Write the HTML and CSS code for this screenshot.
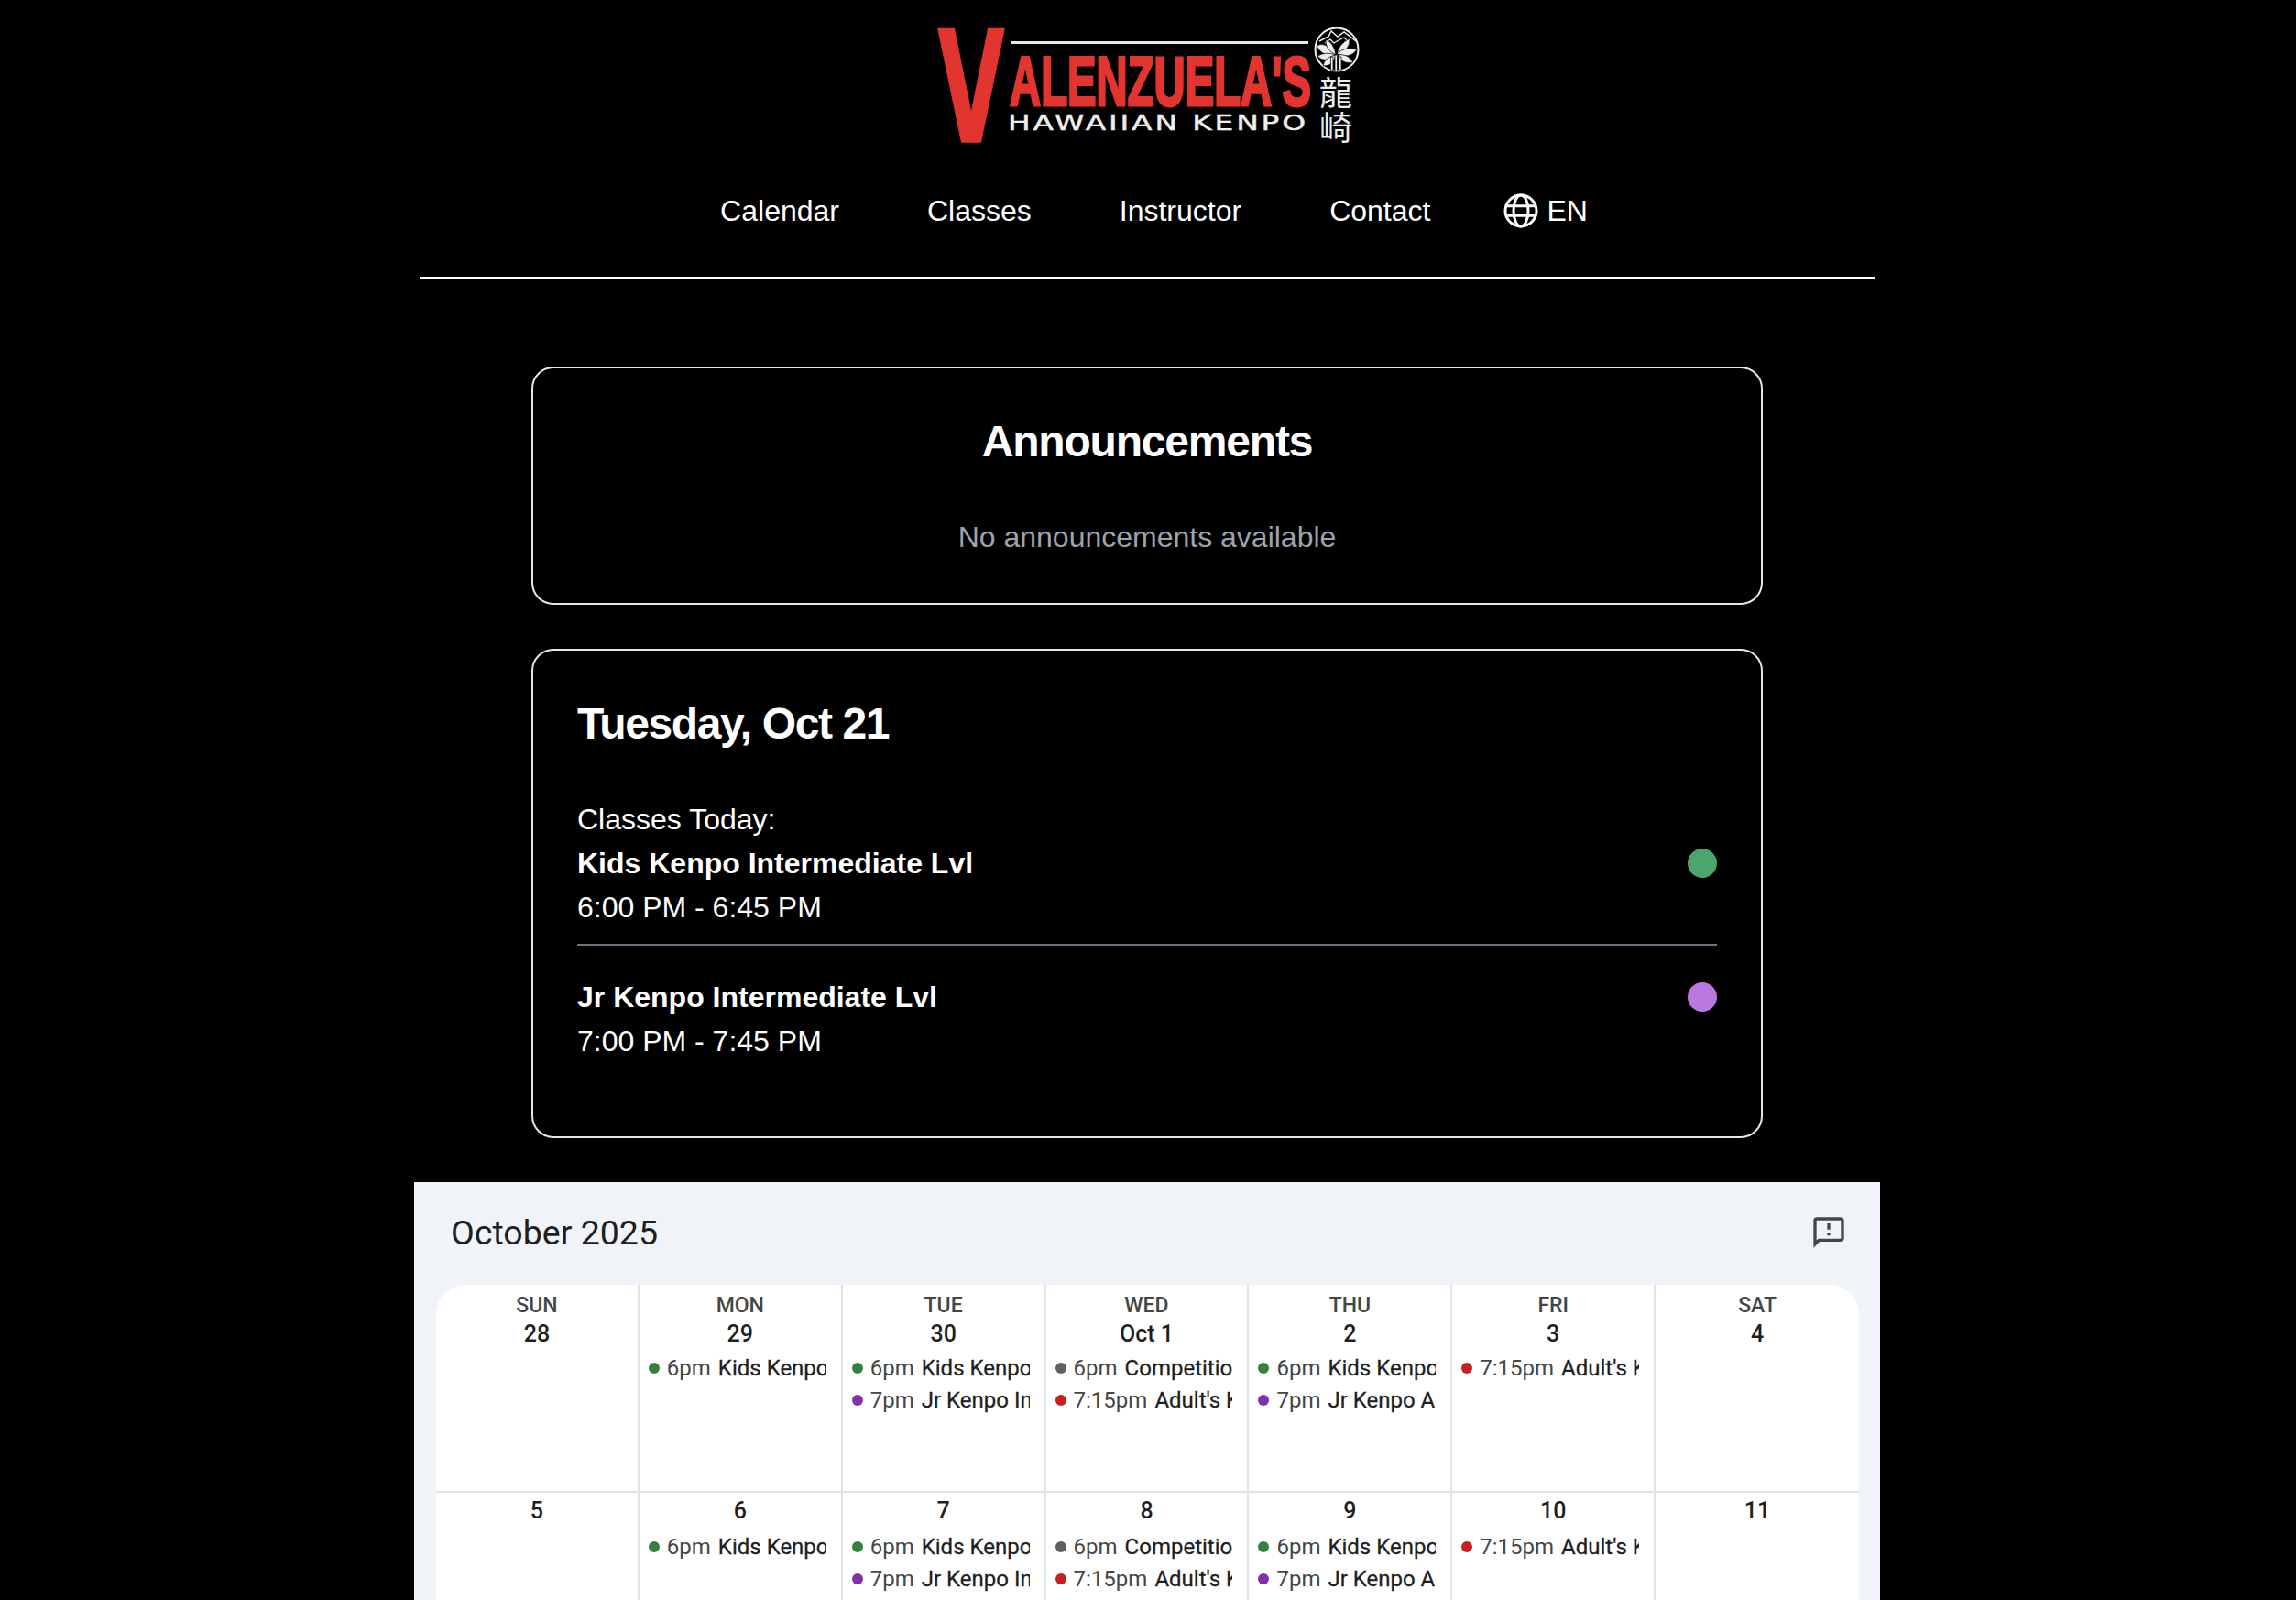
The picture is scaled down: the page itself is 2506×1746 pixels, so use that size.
FILE: index.html
```html
<!DOCTYPE html>
<html lang="en">
<head>
<meta charset="utf-8">
<title>Valenzuela's Hawaiian Kenpo</title>
<link rel="stylesheet" href="styles.css">
</head>
<body>
<div class="page">
  <header class="site-header">
    <svg class="logo" viewBox="1012 24 480 144" width="480" height="144" role="img" aria-label="Valenzuela's Hawaiian Kenpo">
      <text class="logo-v" transform="translate(1060 155) scale(.72 1.28)" text-anchor="middle" font-size="132">V</text>
      <rect x="1103" y="45" width="325" height="3" fill="#e8e8e8"/>
      <text class="logo-name" x="1102" y="114.500" textLength="329" lengthAdjust="spacingAndGlyphs" font-size="76">ALENZUELA'S</text>
      <text class="logo-sub" x="1100" y="142" textLength="328" lengthAdjust="spacingAndGlyphs" font-size="23">HAWAIIAN KENPO</text>
      <circle cx="1459" cy="54" r="23.500" fill="#000" stroke="#eee" stroke-width="2"/>
      <polyline points="1440,45 1450,40 1453,34 1460,40 1467,35 1480,45" fill="none" stroke="#eee" stroke-width="1.500"/>
      <polyline points="1446,47 1452,43 1456,47 1461,44 1467,41 1473,47" fill="none" stroke="#eee" stroke-width="1.200"/>
      <g fill="#eee" stroke="#000" stroke-width=".7">
        <path d="M1458 60Q1447 44 1437 50Q1442 62 1458 60z"/>
        <path d="M1458 60Q1447 56 1438 61Q1445 70 1458 60z"/>
        <path d="M1458 60Q1446 62 1444 72Q1455 73 1458 60z"/>
        <path d="M1458 60Q1456 47 1447 43Q1446 54 1458 60z"/>
        <path d="M1459 60Q1461 48 1473 42Q1474 55 1459 60z"/>
        <path d="M1459 59Q1468 50 1481 54Q1474 65 1459 59z"/>
        <path d="M1460 60Q1471 58 1477 68Q1465 71 1460 60z"/>
        <rect x="1452.500" y="62" width="2.500" height="15"/>
        <rect x="1457" y="60" width="2.500" height="18"/>
        <rect x="1461.500" y="62" width="2.500" height="15"/>
      </g>
      <text class="logo-kanji" x="1458" y="115" text-anchor="middle" font-size="36">龍</text>
      <text class="logo-kanji" x="1458" y="153" text-anchor="middle" font-size="36">崎</text>
    </svg>
    <nav class="site-nav">
      <a class="nav-link">Calendar</a>
      <a class="nav-link">Classes</a>
      <a class="nav-link">Instructor</a>
      <a class="nav-link">Contact</a>
      <button class="lang">
        <svg class="globe" viewBox="0 0 24 24" width="40" height="40" fill="none" stroke="#fff" stroke-width="1.800" stroke-linecap="round"><circle cx="12" cy="12" r="10.200"/><ellipse cx="12" cy="12" rx="4.800" ry="10.200"/><path d="M2.500 8.800h19M2.500 15.200h19"/></svg>
        <span>EN</span>
      </button>
    </nav>
  </header>

  <main class="content">
    <section class="card announce">
      <h2 class="announce-title">Announcements</h2>
      <p class="announce-empty">No announcements available</p>
    </section>

    <section class="card today">
      <h2 class="today-date">Tuesday, Oct 21</h2>
      <p class="today-label">Classes Today:</p>
      <div class="class-item">
        <div class="class-row"><strong>Kids Kenpo Intermediate Lvl</strong><span class="class-dot dot-green"></span></div>
        <div>6:00 PM - 6:45 PM</div>
      </div>
      <div class="class-item">
        <div class="class-row"><strong>Jr Kenpo Intermediate Lvl</strong><span class="class-dot dot-purple"></span></div>
        <div>7:00 PM - 7:45 PM</div>
      </div>
    </section>
  </main>

  <section class="calendar">
    <div class="cal-head">
      <h3 class="cal-title">October 2025</h3>
      <svg class="cal-icon" viewBox="0 0 24 24" width="40" height="40" fill="#444746"><path d="M20 2H4c-1.100 0-2 .9-2 2v18l4-4h14c1.100 0 2-.9 2-2V4c0-1.100-.9-2-2-2zm0 14H5.170L4 17.170V4h16v12zM11 12h2v2h-2zm0-6h2v4h-2z"/></svg>
    </div>
    <div class="cal-grid">
      <div class="cell first"><div class="dow">SUN</div><div class="date">28</div></div>
      <div class="cell first"><div class="dow">MON</div><div class="date">29</div>
        <div class="ev"><i class="ev-dot c-green"></i><span>6pm</span><b>Kids Kenpo Intermediate Lvl</b></div></div>
      <div class="cell first"><div class="dow">TUE</div><div class="date">30</div>
        <div class="ev"><i class="ev-dot c-green"></i><span>6pm</span><b>Kids Kenpo Intermediate Lvl</b></div>
        <div class="ev"><i class="ev-dot c-purple"></i><span>7pm</span><b>Jr Kenpo Intermediate Lvl</b></div></div>
      <div class="cell first"><div class="dow">WED</div><div class="date">Oct 1</div>
        <div class="ev"><i class="ev-dot c-gray"></i><span>6pm</span><b>Competition Team</b></div>
        <div class="ev"><i class="ev-dot c-red"></i><span>7:15pm</span><b>Adult's Kenpo</b></div></div>
      <div class="cell first"><div class="dow">THU</div><div class="date">2</div>
        <div class="ev"><i class="ev-dot c-green"></i><span>6pm</span><b>Kids Kenpo Advanced Lvl</b></div>
        <div class="ev"><i class="ev-dot c-purple"></i><span>7pm</span><b>Jr Kenpo Advanced Lvl</b></div></div>
      <div class="cell first"><div class="dow">FRI</div><div class="date">3</div>
        <div class="ev"><i class="ev-dot c-red"></i><span>7:15pm</span><b>Adult's Kenpo</b></div></div>
      <div class="cell first"><div class="dow">SAT</div><div class="date">4</div></div>

      <div class="cell"><div class="date">5</div></div>
      <div class="cell"><div class="date">6</div>
        <div class="ev"><i class="ev-dot c-green"></i><span>6pm</span><b>Kids Kenpo Intermediate Lvl</b></div></div>
      <div class="cell"><div class="date">7</div>
        <div class="ev"><i class="ev-dot c-green"></i><span>6pm</span><b>Kids Kenpo Intermediate Lvl</b></div>
        <div class="ev"><i class="ev-dot c-purple"></i><span>7pm</span><b>Jr Kenpo Intermediate Lvl</b></div></div>
      <div class="cell"><div class="date">8</div>
        <div class="ev"><i class="ev-dot c-gray"></i><span>6pm</span><b>Competition Team</b></div>
        <div class="ev"><i class="ev-dot c-red"></i><span>7:15pm</span><b>Adult's Kenpo</b></div></div>
      <div class="cell"><div class="date">9</div>
        <div class="ev"><i class="ev-dot c-green"></i><span>6pm</span><b>Kids Kenpo Advanced Lvl</b></div>
        <div class="ev"><i class="ev-dot c-purple"></i><span>7pm</span><b>Jr Kenpo Advanced Lvl</b></div></div>
      <div class="cell"><div class="date">10</div>
        <div class="ev"><i class="ev-dot c-red"></i><span>7:15pm</span><b>Adult's Kenpo</b></div></div>
      <div class="cell"><div class="date">11</div></div>
    </div>
  </section>
</div>
</body>
</html>
```

FILE: styles.css
```css
* { box-sizing: border-box; }

html, body {
  margin: 0;
  height: 100%;
  overflow: hidden;
  background: #000;
}

body {
  color: #fff;
  font-family: "Liberation Sans", Arial, sans-serif;
  font-size: 32px;
  line-height: 48px;
}

.page {
  width: 2504px;
  display: flex;
  flex-direction: column;
  align-items: center;
}

.site-header {
  width: 1588px;
  display: flex;
  flex-direction: column;
  align-items: center;
  padding-top: 24px;
  border-bottom: 2px solid #fff;
  height: 304px;
}

.logo { display: block; flex: none; }

.logo-v {
  fill: #e23530;
  stroke: #e23530;
  stroke-width: 1px;
  font-family: "DejaVu Sans", sans-serif;
  font-weight: 700;
}
.logo-name {
  fill: #e23530;
  stroke: #e23530;
  stroke-width: 3px;
  font-family: "Liberation Sans Narrow", "Liberation Sans", sans-serif;
  font-weight: 700;
}
.logo-sub {
  fill: #eee;
  stroke: #eee;
  stroke-width: .4px;
  font-family: "DejaVu Sans", sans-serif;
  font-weight: 400;
  letter-spacing: 2px;
}
.logo-kanji {
  fill: #eee;
  font-family: "Noto Sans CJK TC", "Noto Sans CJK JP", sans-serif;
}

.site-nav {
  display: flex;
  align-items: center;
  height: 48px;
  margin-top: 38px;
}

.nav-link {
  padding: 0 48px;
  color: #fff;
}

.lang {
  display: flex;
  align-items: center;
  gap: 8px;
  padding: 0 33px 0 31px;
  background: none;
  border: 0;
  color: #fff;
  font: inherit;
}

.globe { flex: none; }

.content {
  width: 1344px;
  padding-top: 96px;
  display: flex;
  flex-direction: column;
  gap: 48px;
}

.card {
  border: 2px solid #e5e7eb;
  border-radius: 24px;
  padding: 48px;
}

.announce-title {
  margin: 0 0 50px;
  padding-top: 2px;
  text-align: center;
  font-size: 48px;
  line-height: 60px;
  letter-spacing: -1.2px;
}

.announce-empty {
  margin: 0;
  text-align: center;
  color: #9ca3af;
}

.today-date {
  margin: 0 0 50px;
  padding-top: 2px;
  font-size: 48px;
  line-height: 60px;
  letter-spacing: -1.4px;
}

.today-label { margin: 0; }

.class-item {
  padding-bottom: 16px;
  border-bottom: 2px solid #6b7280;
}

.class-item + .class-item {
  padding-top: 32px;
  padding-bottom: 32px;
  border-bottom: 0;
}

.class-row {
  display: flex;
  justify-content: space-between;
  align-items: center;
}

.class-dot {
  width: 32px;
  height: 32px;
  border-radius: 50%;
}
.dot-green { background: #4ba56d; }
.dot-purple { background: #bc78de; }

.calendar {
  width: 1600px;
  margin-top: 48px;
  background: #f0f4f9;
  padding: 0 23px 0 24px;
  color: #1f1f1f;
  font-family: Roboto, "Noto Sans", sans-serif;
}

.cal-head {
  height: 112px;
  display: flex;
  align-items: center;
  justify-content: space-between;
  padding: 0 13px 2px 16px;
}

.cal-title {
  margin: 0;
  font-size: 37.500px;
  line-height: 44px;
  font-weight: 400;
}

.cal-grid {
  display: grid;
  grid-template-columns: repeat(7, 1fr);
  grid-auto-rows: 225px;
  background: #fff;
  border-radius: 32px 32px 0 0;
  overflow: hidden;
}

.cell {
  min-width: 0;
  padding-top: 4px;
  border-right: 2px solid #dde3ea;
  border-top: 2px solid #dde3ea;
  text-align: center;
}
.cell:nth-child(7n) { border-right: 0; }
.cell.first {
  padding-top: 8px;
  border-top: 0;
}

.dow {
  height: 30px;
  line-height: 30px;
  font-size: 23px;
  font-weight: 500;
  color: #444746;
}

.date {
  height: 32px;
  line-height: 32px;
  font-size: 25px;
  font-weight: 500;
  margin-bottom: 6px;
}

.first .date { margin-bottom: 4px; }

.ev {
  display: flex;
  align-items: center;
  height: 34.500px;
  margin: 0 16px 0 10px;
  overflow: hidden;
  white-space: nowrap;
  font-size: 24px;
  text-align: left;
  color: #444746;
}

.ev-dot {
  flex: none;
  width: 12px;
  height: 12px;
  border-radius: 50%;
  margin-right: 8px;
}

.ev b {
  color: #1f1f1f;
  font-weight: 400;
  -webkit-text-stroke: .3px #1f1f1f;
  margin-left: 8px;
}

.c-green { background: #33813f; }
.c-purple { background: #8430a6; }
.c-gray { background: #616161; }
.c-red { background: #c5221f; }
```
